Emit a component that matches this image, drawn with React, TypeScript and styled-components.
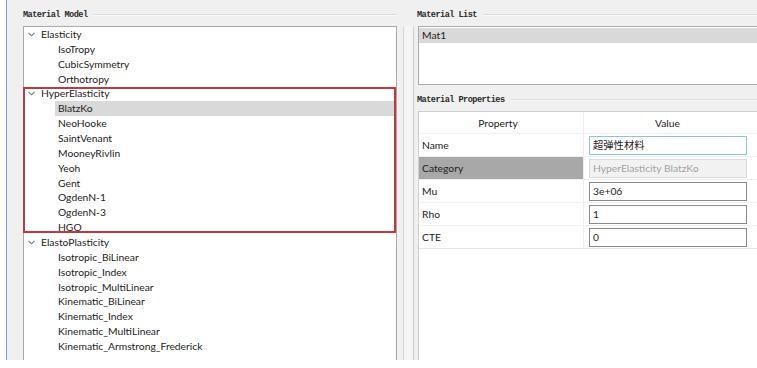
import styled, { createGlobalStyle } from "styled-components";

const GlobalStyle = createGlobalStyle`
    html, body {
        margin: 0;
        padding: 0;
        background: #ffffff;
    }
    body {
        font-family: Lato, "Noto Sans CJK SC", sans-serif;
        color: #222;
    }
`;

interface TreeGroup {
    name: string
    children: string[]
    marked?: boolean
    selected?: string
}

const groups: TreeGroup[] = [
    { name: "Elasticity", children: ["IsoTropy", "CubicSymmetry", "Orthotropy"] },
    {
        name: "HyperElasticity",
        children: ["BlatzKo", "NeoHooke", "SaintVenant", "MooneyRivlin", "Yeoh", "Gent", "OgdenN-1", "OgdenN-3", "HGO"],
        marked: true,
        selected: "BlatzKo",
    },
    {
        name: "ElastoPlasticity",
        children: [
            "Isotropic_BiLinear",
            "Isotropic_Index",
            "Isotropic_MultiLinear",
            "Kinematic_BiLinear",
            "Kinematic_Index",
            "Kinematic_MultiLinear",
            "Kinematic_Armstrong_Frederick",
        ],
    },
];

type Field = { label: string; value: string; kind?: "focus" | "disabled" };

const fields: Field[] = [
    { label: "Name", value: "超弹性材料", kind: "focus" },
    { label: "Category", value: "HyperElasticity BlatzKo", kind: "disabled" },
    { label: "Mu", value: "3e+06" },
    { label: "Rho", value: "1" },
    { label: "CTE", value: "0" },
];

export default function App() {
    return (
        <>
            <GlobalStyle />
            <Window>
                <LeftPane>
                    <GroupTitle>Material Model</GroupTitle>
                    <TreeBox>
                        {groups.map(g => (
                            <Group key={g.name} $marked={g.marked}>
                                <ParentRow>
                                    <Chevron width="7" height="5" viewBox="0 0 7 5">
                                        <path d="M0.5 0.8 L3.5 3.8 L6.5 0.8" fill="none" stroke="#777" strokeWidth="1.1" />
                                    </Chevron>
                                    {g.name}
                                </ParentRow>
                                {g.children.map(c => (
                                    <ChildRow key={c} $selected={g.selected === c}>{c}</ChildRow>
                                ))}
                            </Group>
                        ))}
                    </TreeBox>
                </LeftPane>
                <Splitter />
                <RightPane>
                    <GroupTitle>Material List</GroupTitle>
                    <ListBox>
                        <ListItem $selected>Mat1</ListItem>
                    </ListBox>
                    <GroupTitle>Material Properties</GroupTitle>
                    <Table>
                        <HeaderRow>
                            <HeadCell>Property</HeadCell>
                            <HeadCell>Value</HeadCell>
                        </HeaderRow>
                        {fields.map(f => (
                            <Row key={f.label}>
                                <KeyCell $disabled={f.kind === "disabled"}>{f.label}</KeyCell>
                                <ValueCell>
                                    <Input $kind={f.kind}>{f.value}</Input>
                                </ValueCell>
                            </Row>
                        ))}
                    </Table>
                </RightPane>
            </Window>
        </>
    );
}

const Window = styled.div`
    display: flex;
    height: 358px;
    margin-left: 6px;
    padding-top: 2px;
    border-left: 1px solid #6fa6d3;
    background: #f0f0f0;
    overflow: hidden;
`;

const LeftPane = styled.div`
    width: 374px;
    padding-left: 16px;
    display: flex;
    flex-direction: column;
`;

const GroupTitle = styled.div`
    display: flex;
    align-items: center;
    gap: 6px;
    height: 24px;
    box-sizing: border-box;
    padding-top: 2px;
    font-family: "Liberation Mono", monospace;
    font-size: 8.6px;
    font-weight: bold;
    color: #2a2a2a;
    letter-spacing: -0.55px;
    &::after {
        content: "";
        flex: 1;
        height: 1px;
        background: #dcdcdc;
        border-bottom: 1px solid #fafafa;
    }
`;

const TreeBox = styled.div`
    flex: 1;
    background: #fff;
    border: 1px solid #a9a9a9;
    border-bottom: none;
    font-size: 10.3px;
    line-height: 14.86px;
`;

const Group = styled.div<{ $marked?: boolean }>`
    position: relative;
    &::after {
        content: "";
        display: ${p => (p.$marked ? "block" : "none")};
        position: absolute;
        top: 1px;
        bottom: 2px;
        left: -1px;
        right: 0;
        border: 2px solid #bd3b3d;
        pointer-events: none;
    }
`;

const ParentRow = styled.div`
    display: flex;
    align-items: center;
    padding-left: 4px;
    white-space: nowrap;
`;

const Chevron = styled.svg`
    margin-right: 6px;
`;

const ChildRow = styled.div<{ $selected?: boolean }>`
    margin-left: 31px;
    padding-left: 3px;
    white-space: nowrap;
    background: ${p => (p.$selected ? "#d9d9d9" : "transparent")};
`;

const Splitter = styled.div`
    width: 20px;
    margin-top: 24px;
    box-sizing: border-box;
    border-left: 6px solid #f0f0f0;
    border-right: 3px solid #f0f0f0;
    background: linear-gradient(to right, #d6d6d6 0 1px, #f4f4f4 1px 10px, #cfcfcf 10px 11px);
`;

const RightPane = styled.div`
    flex: 1;
    display: flex;
    flex-direction: column;
    min-width: 0;
`;

const ListBox = styled.div`
    height: 56px;
    margin-left: 1px;
    margin-bottom: 2px;
    background: #fff;
    border: 1px solid #a9a9a9;
    border-right: none;
    padding-top: 1px;
    font-size: 10.3px;
`;

const ListItem = styled.div<{ $selected?: boolean }>`
    height: 15px;
    line-height: 15px;
    padding-left: 3px;
    background: ${p => (p.$selected ? "#d9d9d9" : "transparent")};
`;

const Table = styled.div`
    flex: 1;
    margin-left: 1px;
    background: #fff;
    border-left: 1px solid #cfcfcf;
    border-top: 1px solid #cfcfcf;
    font-size: 10.3px;
`;

const HeaderRow = styled.div`
    display: grid;
    grid-template-columns: 165px 1fr;
    height: 21px;
    align-items: center;
    text-align: center;
    border-bottom: 1px solid #f2f2f2;
`;

const HeadCell = styled.div`
    padding-right: 6px;
    &:first-child {
        border-right: 1px solid #ececec;
        height: 100%;
        display: flex;
        align-items: center;
        justify-content: center;
    }
`;

const Row = styled.div`
    display: grid;
    grid-template-columns: 165px 1fr;
    height: 22px;
    border-bottom: 1px solid #f0f0f0;
    &:last-child {
        border-bottom: 1px solid #e6e6e6;
    }
`;

const KeyCell = styled.div<{ $disabled?: boolean }>`
    display: flex;
    align-items: center;
    padding-left: 3px;
    background: ${p => (p.$disabled ? "#a8a8a8" : "#fff")};
    border-right: 1px solid #ececec;
`;

const ValueCell = styled.div`
    display: flex;
    align-items: center;
    padding-left: 5px;
    padding-right: 10px;
`;

const Input = styled.div<{ $kind?: "focus" | "disabled" }>`
    flex: 1;
    height: 17px;
    line-height: 17px;
    padding-left: 3px;
    border: 1px solid ${p => (p.$kind === "focus" ? "#8fc4d8" : p.$kind === "disabled" ? "#dadada" : "#8a8a8a")};
    background: ${p => (p.$kind === "disabled" ? "#f2f2f2" : "#fff")};
    color: ${p => (p.$kind === "disabled" ? "#a3a3a3" : "#222")};
`;
